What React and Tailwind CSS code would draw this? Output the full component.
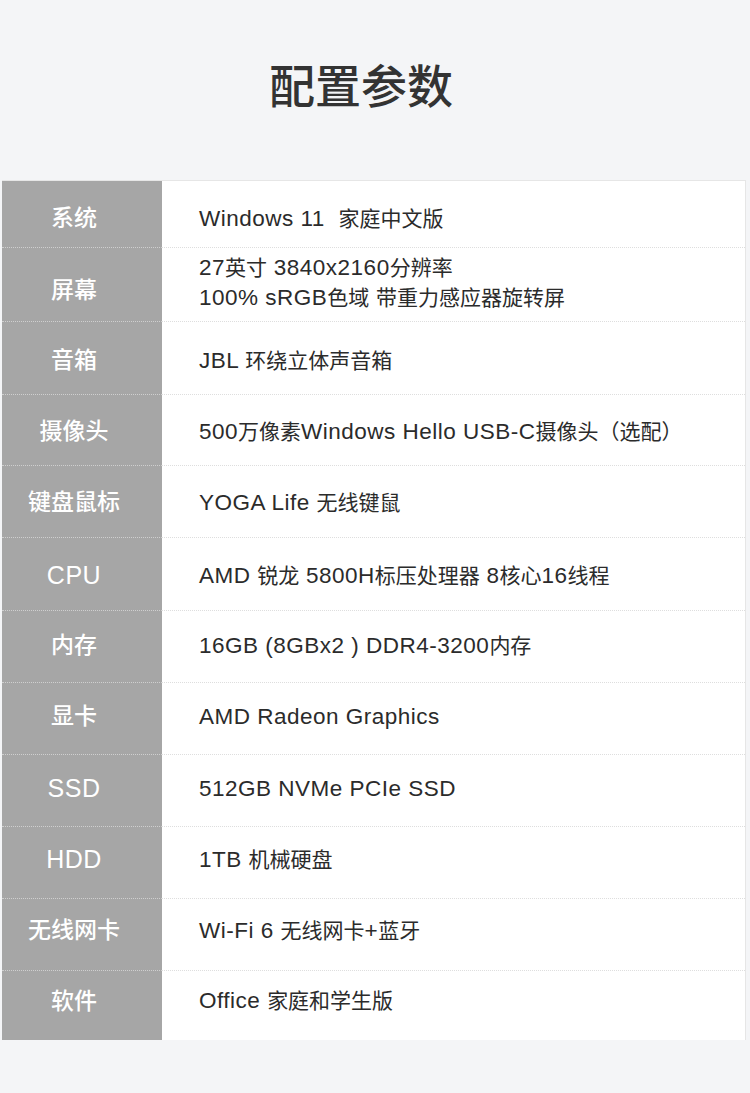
import React from 'react';

const specs = [
  { label: '系统', value: ['Windows 11  家庭中文版'], h: 'h-[67px]', l: 'pt-[11px]', v: 'pt-[11px]' },
  { label: '屏幕', value: ['27英寸 3840x2160分辨率', '100% sRGB色域 带重力感应器旋转屏'], h: 'h-[74px]', l: 'pt-[14px]', v: 'pb-[2px]' },
  { label: '音箱', value: ['JBL 环绕立体声音箱'], h: 'h-[73px]', l: 'pt-[7px]', v: 'pt-[7px]' },
  { label: '摄像头', value: ['500万像素Windows Hello USB-C摄像头（选配）'], h: 'h-[71px]', l: 'pt-[5px]', v: 'pt-[5px]' },
  { label: '键盘鼠标', value: ['YOGA Life 无线键鼠'], h: 'h-[72px]', l: 'pt-[4px]', v: 'pt-[4px]' },
  { label: 'CPU', value: ['AMD 锐龙 5800H标压处理器 8核心16线程'], h: 'h-[73px]', l: 'pt-[5px]', v: 'pt-[5px]' },
  { label: '内存', value: ['16GB (8GBx2 ) DDR4-3200内存'], h: 'h-[72px]', l: '', v: '' },
  { label: '显卡', value: ['AMD Radeon Graphics'], h: 'h-[72px]', l: 'pb-[2px]', v: 'pb-[2px]' },
  { label: 'SSD', value: ['512GB NVMe PCIe SSD'], h: 'h-[72px]', l: 'pb-[2px]', v: 'pb-[2px]' },
  { label: 'HDD', value: ['1TB 机械硬盘'], h: 'h-[72px]', l: 'pb-[4px]', v: 'pb-[4px]' },
  { label: '无线网卡', value: ['Wi-Fi 6 无线网卡+蓝牙'], h: 'h-[72px]', l: 'pb-[6px]', v: 'pb-[6px]' },
  { label: '软件', value: ['Office 家庭和学生版'], h: 'h-[69px]', l: 'pb-[7px]', v: 'pb-[7px]' },
];

const font = "font-['Liberation_Sans','Noto_Sans_CJK_SC',sans-serif]";

// latin runs are drawn a bit larger than the CJK runs, like the original artwork
const splitRuns = (text) => text.split(/([\u3000-\u9fff\uff00-\uffef]+)/).filter(Boolean);
const isCjk = (s) => /[\u3000-\u9fff\uff00-\uffef]/.test(s);

const Mixed = ({ text, cjk, latin }) => (
  <>
    {splitRuns(text).map((run, i) => (
      <span key={i} className={isCjk(run) ? cjk : latin}>
        {run}
      </span>
    ))}
  </>
);

const App = () => {
  return (
    <div className={`min-h-[1093px] w-[750px] bg-[#f4f5f7] ${font}`}>
      {/* Title */}
      <div className="h-[180px] flex items-center justify-center pb-[6px] pr-[28px]">
        <h1 className="text-[46px] font-medium text-[#333]">配置参数</h1>
      </div>

      {/* Table */}
      <div className="ml-[2px] w-[744px] bg-white border-r border-t border-[#e6e6e6]">
        {specs.map((row, i) => {
          const last = i === specs.length - 1;
          return (
            <div key={row.label} className={`flex ${row.h}`}>
              <div
                className={`w-[160px] flex-shrink-0 bg-[#a6a6a6] flex items-center justify-center pr-4 text-white font-medium leading-[30px] ${row.l} ${
                  last ? '' : 'border-b border-dotted border-[#cfcfcf]'
                }`}
              >
                <div className="whitespace-pre">
                  <Mixed text={row.label} cjk="text-[23px]" latin="text-[25px] tracking-[0.5px] font-normal" />
                </div>
              </div>
              <div
                className={`flex-1 flex flex-col justify-center pl-[37px] text-[#2b2b2b] leading-[28px] ${row.v} ${
                  last ? '' : 'border-b border-dotted border-[#dedede]'
                }`}
              >
                {row.value.map((line) => (
                  <div key={line} className="whitespace-pre">
                    <Mixed text={line} cjk="text-[21px]" latin="text-[22.5px] tracking-[0.5px]" />
                  </div>
                ))}
              </div>
            </div>
          );
        })}
      </div>
    </div>
  );
};

export default App;
